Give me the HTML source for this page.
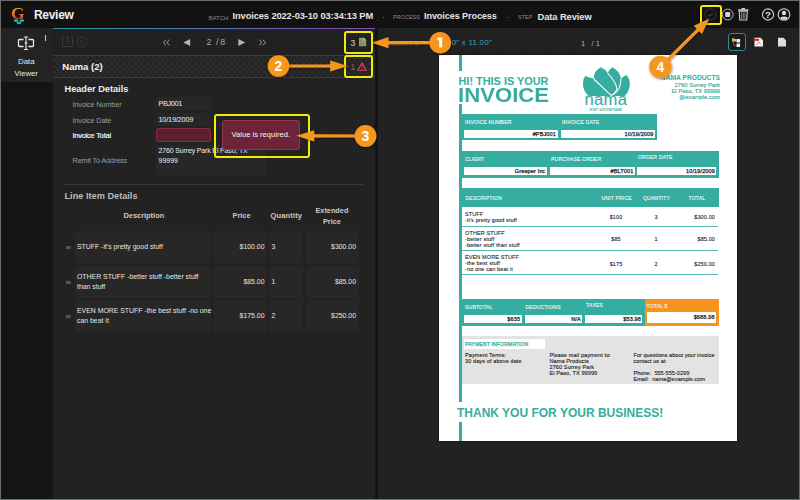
<!DOCTYPE html>
<html><head><meta charset="utf-8">
<style>
*{margin:0;padding:0;box-sizing:border-box}
html,body{width:800px;height:500px;overflow:hidden;background:#1f1f1f}
body{font-family:"Liberation Sans",sans-serif;position:relative;color:#e8e8e8}
.a{position:absolute}
.t{position:absolute;white-space:nowrap;line-height:1}
.b{font-weight:bold}
.grid{background-color:#1f1f1f;background-image:linear-gradient(#222 1px,transparent 1px),linear-gradient(90deg,#222 1px,transparent 1px);background-size:3px 3px}
.chk{background-color:#232323;background-image:linear-gradient(45deg,#2c2c2c 25%,transparent 25%,transparent 75%,#2c2c2c 75%),linear-gradient(45deg,#2c2c2c 25%,transparent 25%,transparent 75%,#2c2c2c 75%);background-size:6px 6px;background-position:0 0,3px 3px}
.ybox{position:absolute;border:2px solid #f2ea0a;border-radius:3px}
.cell{position:absolute;background:#272727;border-radius:2px}
.fld{position:absolute;background:#272727;border-radius:2px}
.lbl{position:absolute;white-space:nowrap;line-height:1;font-size:7.4px;letter-spacing:-0.2px;color:#9c9c9c}
.val{position:absolute;white-space:nowrap;line-height:1;font-size:7px;color:#ececec}
.ct{position:absolute;white-space:nowrap;line-height:10px;font-size:6.9px;color:#e6e6e6}
/* invoice */
.tl{background:#35ada0}
.inv{position:absolute;white-space:nowrap;line-height:1;font-size:5.1px;letter-spacing:0.15px;-webkit-text-stroke:0.12px #eef9f8;color:#eef9f8}
.wi{position:absolute;background:#fff}
.iv{position:absolute;white-space:nowrap;line-height:1;font-size:5.5px;letter-spacing:0.15px;-webkit-text-stroke:0.25px #222;color:#222;text-align:right}
.ix{position:absolute;white-space:nowrap;line-height:6px;font-size:5.5px;letter-spacing:0.12px;-webkit-text-stroke:0.1px #262626;color:#262626}
</style></head><body>
<!-- header -->
<div class="a" style="left:0;top:0;width:800px;height:28px;background:#121212"></div>
<!-- left nav -->
<div class="a" style="left:0;top:28px;width:53px;height:472px;background:#141414"></div>
<div class="a" style="left:0;top:28px;width:53px;height:54px;background:#232323"></div>
<!-- left panel -->
<div class="a" style="left:53px;top:28px;width:322px;height:472px;background:#222"></div>
<div class="a grid" style="left:53px;top:29px;width:322px;height:26px"></div>
<div class="a" style="left:53px;top:27.6px;width:322px;height:1.2px;background:linear-gradient(90deg,#1f9aa6,#4a78b0 45%,#8a45b8)"></div>
<div class="a" style="left:53px;top:55px;width:322px;height:1px;background:#3c3c3c"></div>
<div class="a chk" style="left:53px;top:56px;width:322px;height:21px"></div>
<div class="a" style="left:53px;top:77px;width:322px;height:1px;background:#3c3c3c"></div>
<!-- separator -->
<div class="a" style="left:375px;top:28px;width:3px;height:472px;background:#141414"></div>
<!-- right panel -->
<div class="a" style="left:378px;top:28px;width:422px;height:472px;background:#222"></div>
<div class="a grid" style="left:378px;top:28px;width:422px;height:27px"></div>

<!-- header content -->
<div class="t b" style="left:11px;top:5px;font-family:'Liberation Serif',serif;font-size:17.5px;line-height:17.5px;background:linear-gradient(#f0952a 25%,#dc3a26 85%);-webkit-background-clip:text;color:transparent">G</div>
<svg class="a" style="left:13px;top:19px" width="12" height="6" viewBox="0 0 12 6"><ellipse cx="3" cy="1.6" rx="2.4" ry="1.3" fill="#1fb0a6"/><ellipse cx="9" cy="1.6" rx="2.4" ry="1.3" fill="#1fb0a6"/><ellipse cx="6" cy="3.9" rx="2.4" ry="1.3" fill="#1fb0a6"/></svg>
<div class="t b" style="left:34px;top:9px;font-size:12px;letter-spacing:-0.3px;color:#f0f0f0">Review</div>
<div class="t" style="left:208.5px;top:14.5px;font-size:6px;color:#8a8a8a">BATCH</div>
<div class="t b" style="left:232.5px;top:11.5px;font-size:9.3px;letter-spacing:-0.1px;color:#e4e4e4">Invoices 2022-03-10 03:34:13 PM</div>
<div class="a" style="left:382.5px;top:16.5px;width:1.6px;height:1.6px;background:#888;border-radius:1px"></div>
<div class="t" style="left:393px;top:14.5px;font-size:5.5px;color:#8a8a8a">PROCESS</div>
<div class="t b" style="left:424px;top:11.5px;font-size:9.1px;letter-spacing:-0.1px;color:#e4e4e4">Invoices Process</div>
<div class="a" style="left:507.5px;top:16.5px;width:1.6px;height:1.6px;background:#888;border-radius:1px"></div>
<div class="t" style="left:518px;top:14.5px;font-size:5.5px;color:#8a8a8a">STEP</div>
<div class="t b" style="left:537.5px;top:11.5px;font-size:9.4px;letter-spacing:-0.1px;color:#e4e4e4">Data Review</div>
<!-- header icons -->
<div class="ybox" style="left:700px;top:5px;width:21.5px;height:19.5px"></div>
<svg class="a" style="left:704px;top:8px" width="13" height="13" viewBox="0 0 13 13"><circle cx="6.5" cy="6.5" r="5.5" fill="none" stroke="#3a3a3a" stroke-width="1"/><path d="M4.2 6.5 L5.9 8.2 L8.8 4.9" fill="none" stroke="#4a5663" stroke-width="0.9"/></svg>
<svg class="a" style="left:721px;top:8px" width="14" height="14" viewBox="0 0 14 14"><circle cx="6.7" cy="6.5" r="5.4" fill="none" stroke="#c8c8c8" stroke-width="0.9"/><rect x="4.2" y="4" width="5" height="5" rx="0.8" fill="#d4d4d4"/></svg>
<svg class="a" style="left:737px;top:8px" width="13" height="13" viewBox="0 0 13 13"><rect x="1" y="1.2" width="10.5" height="1.6" rx="0.5" fill="#cfcfcf"/><rect x="4.5" y="0" width="3.5" height="1.5" fill="#cfcfcf"/><path d="M2.2 3.3 H10.3 L9.7 12 H2.8 Z" fill="none" stroke="#cfcfcf" stroke-width="1.1"/><path d="M4.6 4.5 V10.8 M6.25 4.5 V10.8 M7.9 4.5 V10.8" stroke="#b9a2a2" stroke-width="0.8"/></svg>
<svg class="a" style="left:761px;top:8px" width="14" height="14" viewBox="0 0 14 14"><circle cx="7" cy="6.5" r="5.6" fill="none" stroke="#d0d0d0" stroke-width="1.1"/><text x="7" y="10" font-family="Liberation Sans" font-weight="bold" font-size="9.6" fill="#d8d8d8" text-anchor="middle">?</text></svg>
<svg class="a" style="left:777px;top:8px" width="14" height="14" viewBox="0 0 14 14"><defs><clipPath id="uc"><circle cx="7" cy="6.5" r="5.2"/></clipPath></defs><circle cx="7" cy="6.5" r="5.8" fill="none" stroke="#d0d0d0" stroke-width="1.1"/><g clip-path="url(#uc)" fill="#d8d8d8"><circle cx="7" cy="5" r="2.2"/><ellipse cx="7" cy="12" rx="4.8" ry="3.6"/></g></svg>

<!-- nav button -->
<svg class="a" style="left:17px;top:36px" width="19" height="15" viewBox="0 0 19 15"><path d="M6.5 3.5 H2.5 Q1.5 3.5 1.5 4.5 V9.5 Q1.5 10.5 2.5 10.5 H6.5" fill="none" stroke="#ececec" stroke-width="1.3"/><path d="M11.5 3.5 H15.5 Q16.5 3.5 16.5 4.5 V9.5 Q16.5 10.5 15.5 10.5 H11.5" fill="none" stroke="#ececec" stroke-width="1.3"/><path d="M6.8 1 H11.2 M9 1 V13.5 M6.8 13.5 H11.2 M7.5 7 H10.5" fill="none" stroke="#dfe3f0" stroke-width="1.2"/></svg>
<div class="t" style="left:18px;top:58px;font-size:7.9px;color:#e8e8e8">Data</div>
<div class="t" style="left:14.5px;top:69.5px;font-size:7.7px;color:#e8e8e8">Viewer</div>
<div class="a" style="left:45px;top:35px;width:1.4px;height:6px;background:#e8e000"></div>

<!-- left toolbar -->
<svg class="a" style="left:61px;top:35px" width="13" height="13" viewBox="0 0 13 13"><path d="M3.5 1.5 H2.2 Q1.5 1.5 1.5 2.2 V10.8 Q1.5 11.5 2.2 11.5 H10.8 Q11.5 11.5 11.5 10.8 V2.2 Q11.5 1.5 10.8 1.5 H9.5" fill="none" stroke="#3a3a3a" stroke-width="1"/><path d="M6.5 1 V7.5 M4.3 5.5 L6.5 7.8 L8.7 5.5" fill="none" stroke="#3a3a3a" stroke-width="1"/></svg>
<svg class="a" style="left:76px;top:36px" width="12" height="12" viewBox="0 0 12 12"><circle cx="6" cy="6" r="5" fill="none" stroke="#363636" stroke-width="1"/><path d="M3.8 3.8 L8.2 8.2 M8.2 3.8 L3.8 8.2" stroke="#363636" stroke-width="0.9"/></svg>
<svg class="a" style="left:162px;top:39px" width="9" height="7" viewBox="0 0 9 7"><path d="M4 0.8 L1.2 3.5 L4 6.2 M7.6 0.8 L4.8 3.5 L7.6 6.2" fill="none" stroke="#a8a8a8" stroke-width="1"/></svg>
<svg class="a" style="left:183px;top:38.5px" width="8" height="7" viewBox="0 0 8 7"><path d="M0.3 3.5 L7.2 0 V7 Z" fill="#b4b4b4"/></svg>
<div class="t" style="left:206.5px;top:38.3px;font-size:8.8px;color:#a9a9a9">2</div>
<div class="t" style="left:216px;top:38.3px;font-size:8.8px;letter-spacing:-0.3px;color:#a9a9a9">/ 8</div>
<svg class="a" style="left:238px;top:38.5px" width="8" height="7" viewBox="0 0 8 7"><path d="M7.2 3.5 L0.3 0 V7 Z" fill="#b4b4b4"/></svg>
<svg class="a" style="left:258px;top:39px" width="9" height="7" viewBox="0 0 9 7"><path d="M1.2 0.8 L4 3.5 L1.2 6.2 M4.8 0.8 L7.6 3.5 L4.8 6.2" fill="none" stroke="#a8a8a8" stroke-width="1"/></svg>
<div class="t" style="left:350.5px;top:38.5px;font-size:8.6px;color:#d9d6b8">3</div>
<svg class="a" style="left:358px;top:37px" width="9" height="10" viewBox="0 0 9 10"><path d="M1 0.8 H5.8 L8.2 3.2 V9.2 H1 Z" fill="#8a9a6a"/><path d="M5.8 0.8 V3.2 H8.2" fill="#c9d0b0"/><path d="M2.6 3 V8" stroke="#b06c4a" stroke-width="0.8"/><path d="M4 4 V8 M5.5 4.5 V8" stroke="#4fa07a" stroke-width="0.8"/></svg>
<div class="ybox" style="left:344px;top:31px;width:28.5px;height:23px"></div>
<div class="t b" style="left:62.3px;top:62px;font-size:9.6px;color:#f2f2f2">Nama (2)</div>
<div class="t" style="left:350.5px;top:63px;font-size:8.6px;color:#d8405e">1</div>
<svg class="a" style="left:357px;top:62px" width="10" height="9" viewBox="0 0 10 9"><path d="M5 0.9 L9.3 8.3 H0.7 Z" fill="none" stroke="#d8405e" stroke-width="1.1" stroke-linejoin="round"/><path d="M5 3.2 V5.8 M5 6.6 V7.3" stroke="#d8405e" stroke-width="0.9"/></svg>
<div class="ybox" style="left:344px;top:55px;width:28.5px;height:23px"></div>

<!-- header details -->
<div class="t b" style="left:64.5px;top:84.5px;font-size:9.2px;color:#ececec">Header Details</div>
<div class="lbl" style="left:72.5px;top:100.5px">Invoice Number</div>
<div class="lbl" style="left:72.5px;top:116.5px">Invoice Date</div>
<div class="lbl" style="left:72.5px;top:132px;color:#f4f4f4;-webkit-text-stroke:0.2px #f4f4f4">Invoice Total</div>
<div class="lbl" style="left:72.5px;top:156.5px">Remit To Address</div>
<div class="fld" style="left:156px;top:97px;width:55px;height:13px"></div>
<div class="fld" style="left:156px;top:113px;width:55px;height:13px"></div>
<div class="a" style="left:156px;top:128px;width:55px;height:14px;background:#5c1f2e;border:1px solid #8a2a40;border-radius:2px"></div>
<div class="fld" style="left:156px;top:145px;width:110px;height:31px"></div>
<div class="val" style="left:158.5px;top:100px;letter-spacing:-0.4px;font-size:7.4px">PBJ001</div>
<div class="val" style="left:158.5px;top:116px;font-size:7.4px;letter-spacing:-0.25px">10/19/2009</div>
<div class="val" style="left:158.5px;top:146.5px;letter-spacing:-0.15px">2760 Surrey Park El Paso, TX</div>
<div class="val" style="left:158.5px;top:156.5px">99999</div>
<div class="a" style="left:64px;top:184px;width:300px;height:1px;background:#373737"></div>
<!-- tooltip -->
<div class="a" style="left:222px;top:120px;width:78px;height:30px;background:#6e2438;border:1px solid #933650;border-radius:3px"></div>
<div class="t" style="left:231.5px;top:131px;font-size:7.6px;color:#f4f4f4">Value is required.</div>
<div class="ybox" style="left:213.5px;top:113.5px;width:96px;height:44px"></div>
<!-- line items -->
<div class="t b" style="left:64.5px;top:192px;font-size:9.2px;color:#b9b9b9">Line Item Details</div>
<div class="t b" style="left:123.5px;top:212px;font-size:7.4px;color:#c9c9c9">Description</div>
<div class="t b" style="left:232.5px;top:212px;font-size:7.4px;color:#c9c9c9">Price</div>
<div class="t b" style="left:270.5px;top:212px;font-size:7.5px;color:#c9c9c9;letter-spacing:0.15px">Quantity</div>
<div class="t b" style="left:315.5px;top:207px;font-size:7.3px;color:#c9c9c9">Extended</div>
<div class="t b" style="left:323px;top:217.5px;font-size:7.3px;color:#c9c9c9">Price</div>
<div class="cell" style="left:75px;top:231px;width:136px;height:32px"></div>
<div class="cell" style="left:214px;top:231px;width:52px;height:32px"></div>
<div class="cell" style="left:269px;top:231px;width:34px;height:32px"></div>
<div class="cell" style="left:306px;top:231px;width:53px;height:32px"></div>
<div class="a" style="left:66px;top:246.0px;width:5px;height:2.5px;background:#555;border-radius:0 1px 1px 0"></div>
<div class="ct" style="left:77px;top:242.0px">STUFF -it's pretty good stuff</div>
<div class="ct" style="left:214px;top:242.0px;width:50.5px;text-align:right">$100.00</div>
<div class="ct" style="left:271.5px;top:242.0px">3</div>
<div class="ct" style="left:306px;top:242.0px;width:50px;text-align:right">$300.00</div>
<div class="cell" style="left:75px;top:266px;width:136px;height:32px"></div>
<div class="cell" style="left:214px;top:266px;width:52px;height:32px"></div>
<div class="cell" style="left:269px;top:266px;width:34px;height:32px"></div>
<div class="cell" style="left:306px;top:266px;width:53px;height:32px"></div>
<div class="a" style="left:66px;top:281.0px;width:5px;height:2.5px;background:#555;border-radius:0 1px 1px 0"></div>
<div class="ct" style="left:77px;top:272.0px">OTHER STUFF -better stuff -better stuff<br>than stuff</div>
<div class="ct" style="left:214px;top:277.0px;width:50.5px;text-align:right">$85.00</div>
<div class="ct" style="left:271.5px;top:277.0px">1</div>
<div class="ct" style="left:306px;top:277.0px;width:50px;text-align:right">$85.00</div>
<div class="cell" style="left:75px;top:300px;width:136px;height:32px"></div>
<div class="cell" style="left:214px;top:300px;width:52px;height:32px"></div>
<div class="cell" style="left:269px;top:300px;width:34px;height:32px"></div>
<div class="cell" style="left:306px;top:300px;width:53px;height:32px"></div>
<div class="a" style="left:66px;top:315.0px;width:5px;height:2.5px;background:#555;border-radius:0 1px 1px 0"></div>
<div class="ct" style="left:77px;top:306.0px">EVEN MORE STUFF -the best stuff -no one<br>can beat it</div>
<div class="ct" style="left:214px;top:311.0px;width:50.5px;text-align:right">$175.00</div>
<div class="ct" style="left:271.5px;top:311.0px">2</div>
<div class="ct" style="left:306px;top:311.0px;width:50px;text-align:right">$250.00</div>

<!-- right toolbar -->
<div class="t" style="left:388px;top:39.5px;font-size:7px;color:#5a6066">Zoom:</div>
<div class="t" style="left:410px;top:39.5px;font-size:7px;color:#2b8a96">Fit</div>
<div class="t" style="left:440px;top:38.8px;font-size:8px;letter-spacing:0.2px;color:#36aabb">8.50" x 11.00"</div>
<div class="t" style="left:581px;top:39.5px;font-size:7.6px;color:#aeb4b8">1</div>
<div class="t" style="left:591.5px;top:39.5px;font-size:7.6px;color:#aeb4b8">/ 1</div>
<div class="a" style="left:728px;top:33px;width:18px;height:18px;border:1.2px solid #2a8f96;border-radius:3px;background:#1a1a1a"></div>
<svg class="a" style="left:731px;top:37px" width="11" height="11" viewBox="0 0 11 11"><path d="M1 1.2 H3 L3.6 1.9 H5.3 V4.6 H1 Z" fill="#e2b65a"/><path d="M2.5 4.6 V7.5 Q2.5 8.3 3.3 8.3 H5.5" fill="none" stroke="#9a9a9a" stroke-width="0.6"/><rect x="5.5" y="2" width="3.6" height="3.6" rx="0.6" fill="#eeeeee"/><rect x="5.5" y="6.4" width="3.6" height="3.6" rx="0.6" fill="#eeeeee"/></svg>
<svg class="a" style="left:753px;top:37px" width="11" height="10" viewBox="0 0 11 10"><path d="M1.5 0.8 H7.5 L10 3.2 V9.5 H1.5 Z" fill="#f4f4f4"/><rect x="0.5" y="1.8" width="5.5" height="2" fill="#e01818"/><path d="M3.5 8 Q5 5 6 4.8 Q7 6.5 8.5 7.8" fill="none" stroke="#e03030" stroke-width="0.6"/></svg>
<svg class="a" style="left:777px;top:37px" width="10" height="10" viewBox="0 0 10 10"><path d="M1 0.8 H6.5 L9 3.2 V9.5 H1 Z" fill="#dcdcdc"/></svg>
<!-- page -->
<div class="a" style="left:439px;top:55px;width:298px;height:385.5px;background:#fff;box-shadow:0 0 1.5px rgba(0,0,0,0.8)"></div>
<div class="a tl" style="left:459px;top:55px;width:3px;height:16px"></div>
<div class="a tl" style="left:459px;top:104px;width:3px;height:298px"></div>
<div class="a tl" style="left:459px;top:422px;width:3px;height:19px"></div>
<div class="t b" style="left:458.5px;top:75.5px;font-size:10.9px;color:#35ada0">HI! THIS IS YOUR</div>
<div class="t b" style="left:458px;top:86px;font-size:19.8px;transform:scaleX(1.12);transform-origin:0 0;color:#35ada0">INVOICE</div>

<!-- logo -->
<svg class="a" style="left:580px;top:63px" width="52" height="34" viewBox="0 0 52 34">
<path d="M5.4 13 Q9 14.5 14 15.8 Q13.2 8 20.9 4.3 Q25.5 6.5 27.7 10 Q29 6.5 32.4 4.3 Q39.8 8 41 15.8 Q43.5 12.8 46.8 11.9 Q51.5 19 49 26 Q47.5 31 44.6 33 L8.6 33 Q2.2 27 3 19 Q3.6 15 5.4 13 Z" fill="#35ada0"/>
<path d="M13.8 16 L31 32.4" fill="none" stroke="#fff" stroke-width="1.05"/>
<path d="M27.6 10 Q37.5 21 36.8 26.6 Q35 30.5 31 32.4" fill="none" stroke="#fff" stroke-width="1.05"/>
<path d="M41 15.8 Q40.8 23.5 37.5 27.8 Q34.8 31 31 32.4" fill="none" stroke="#fff" stroke-width="1.05"/>
</svg>
<div class="t" style="left:584.5px;top:91.5px;font-size:16.6px;letter-spacing:0.3px;-webkit-text-stroke:0.1px #35ada0;color:#35ada0">nama</div>
<div class="t" style="left:589.8px;top:107.8px;font-size:4.2px;letter-spacing:0.12px;-webkit-text-stroke:0.15px #35ada0;color:#35ada0">EST 02/18/2006</div>
<!-- company -->
<div class="t b" style="left:620px;top:75px;width:100px;text-align:right;font-size:6.7px;color:#35ada0">NAMA PRODUCTS</div>
<div class="t" style="left:620px;top:82.7px;width:100px;text-align:right;font-size:5.85px;-webkit-text-stroke:0.15px #35ada0;color:#35ada0">2760 Surrey Park</div>
<div class="t" style="left:620px;top:88.7px;width:100px;text-align:right;font-size:5.85px;-webkit-text-stroke:0.15px #35ada0;color:#35ada0">El Paso, TX 99999</div>
<div class="t" style="left:620px;top:95.2px;width:100px;text-align:right;font-size:5.85px;-webkit-text-stroke:0.15px #35ada0;color:#35ada0">@example.com</div>
<!-- section 1 -->
<div class="a tl" style="left:459px;top:114px;width:198px;height:26px"></div>
<div class="inv" style="left:465px;top:119.5px">INVOICE NUMBER</div>
<div class="inv" style="left:562px;top:119.5px">INVOICE DATE</div>
<div class="wi" style="left:464px;top:130px;width:93.5px;height:7.5px"></div>
<div class="wi" style="left:560.5px;top:130px;width:94px;height:7.5px"></div>
<div class="iv" style="left:464px;top:131.5px;width:92px">#PBJ001</div>
<div class="iv" style="left:560px;top:131.5px;width:93.5px">10/19/2009</div>
<!-- section 2 -->
<div class="a tl" style="left:459px;top:151px;width:259.5px;height:26.5px"></div>
<div class="inv" style="left:465px;top:156.5px">CLIENT</div>
<div class="inv" style="left:551px;top:156.5px">PURCHASE ORDER</div>
<div class="inv" style="left:638px;top:154.5px">ORDER DATE</div>
<div class="wi" style="left:464px;top:166.7px;width:83px;height:8px"></div>
<div class="wi" style="left:550px;top:166.7px;width:84.5px;height:8px"></div>
<div class="wi" style="left:637px;top:166.7px;width:78.5px;height:8px"></div>
<div class="iv" style="left:464px;top:168.5px;width:81.5px">Greeper Inc</div>
<div class="iv" style="left:550px;top:168.5px;width:83.5px">#BLT001</div>
<div class="iv" style="left:637px;top:168.5px;width:78px">10/19/2009</div>
<!-- section 3 -->
<div class="a tl" style="left:459px;top:188px;width:260px;height:19px"></div>
<div class="inv" style="left:465.5px;top:195.5px">DESCRIPTION</div>
<div class="inv" style="left:601.5px;top:195.5px">UNIT PRICE</div>
<div class="inv" style="left:643px;top:195.5px">QUANTITY</div>
<div class="inv" style="left:688.5px;top:195.5px">TOTAL</div>
<div class="a tl" style="left:462px;top:226px;width:256px;height:0.7px;opacity:0.85"></div>
<div class="a tl" style="left:462px;top:250.3px;width:256px;height:0.7px;opacity:0.85"></div>
<div class="a tl" style="left:462px;top:274px;width:256px;height:0.7px;opacity:0.85"></div>
<div class="ix" style="left:465px;top:211px">STUFF<br>-it's pretty good stuff</div>
<div class="ix" style="left:465px;top:229.5px">OTHER STUFF<br>-better stuff<br>-better stuff than stuff</div>
<div class="ix" style="left:465px;top:254px">EVEN MORE STUFF<br>-the best stuff<br>-no one can beat it</div>
<div class="ix" style="left:596px;top:214px;width:40px;text-align:center">$100</div>
<div class="ix" style="left:596px;top:236px;width:40px;text-align:center">$85</div>
<div class="ix" style="left:596px;top:260.5px;width:40px;text-align:center">$175</div>
<div class="ix" style="left:636px;top:214px;width:40px;text-align:center">3</div>
<div class="ix" style="left:636px;top:236px;width:40px;text-align:center">1</div>
<div class="ix" style="left:636px;top:260.5px;width:40px;text-align:center">2</div>
<div class="ix" style="left:655px;top:214px;width:60px;text-align:right">$300.00</div>
<div class="ix" style="left:655px;top:236px;width:60px;text-align:right">$85.00</div>
<div class="ix" style="left:655px;top:260.5px;width:60px;text-align:right">$250.00</div>
<!-- totals -->
<div class="a tl" style="left:459px;top:299px;width:185.5px;height:26.8px"></div>
<div class="a" style="left:644.5px;top:299px;width:74.5px;height:26.8px;background:#f7941d"></div>
<div class="inv" style="left:465px;top:304.5px">SUBTOTAL</div>
<div class="inv" style="left:525.5px;top:304.5px">DEDUCTIONS</div>
<div class="inv" style="left:586px;top:302.8px">TAXES</div>
<div class="inv" style="left:646.5px;top:304px">TOTAL $</div>
<div class="wi" style="left:464px;top:315.3px;width:57.7px;height:7.3px"></div>
<div class="wi" style="left:524.7px;top:315.3px;width:57px;height:7.3px"></div>
<div class="wi" style="left:585px;top:315.3px;width:57px;height:7.3px"></div>
<div class="wi" style="left:646.6px;top:312px;width:69.5px;height:11px"></div>
<div class="iv" style="left:464px;top:316.5px;width:56.2px">$635</div>
<div class="iv" style="left:524.7px;top:316.5px;width:56.2px">N/A</div>
<div class="iv" style="left:585px;top:316.5px;width:56px">$53.98</div>
<div class="iv" style="left:646.6px;top:315px;width:68px">$688.98</div>
<!-- payment -->
<div class="a" style="left:462px;top:336.3px;width:257px;height:47.7px;background:#e3e3e3"></div>
<div class="wi" style="left:464px;top:339px;width:81px;height:10px"></div>
<div class="inv" style="left:465px;top:341.5px;color:#35ada0;-webkit-text-stroke:0.25px #35ada0">PAYMENT INFORMATION</div>
<div class="ix" style="left:465px;top:351.5px;-webkit-text-stroke:0.12px #1c1c1c;color:#1c1c1c">Payment Terms:<br>30 days of above date</div>
<div class="ix" style="left:549.5px;top:351.5px;-webkit-text-stroke:0.12px #1c1c1c;color:#1c1c1c">Please mail payment to:<br>Nama Products<br>2760 Surrey Park<br>El Paso, TX 99999</div>
<div class="ix" style="left:633.5px;top:351.5px;letter-spacing:0.05px;-webkit-text-stroke:0.12px #1c1c1c;color:#1c1c1c">For questions about your invoice<br>contact us at:<br><br>Phone:&nbsp; 555-555-0299<br>Email:&nbsp; nama@example.com</div>
<div class="t b" style="left:457px;top:407px;font-size:12px;transform:scaleX(1.0);transform-origin:0 0;color:#35ada0">THANK YOU FOR YOUR BUSINESS!</div>
<!-- arrows -->
<svg class="a" style="left:0;top:0;z-index:40" width="800" height="500" viewBox="0 0 800 500"><defs><filter id="sh" x="-30%" y="-30%" width="160%" height="160%"><feDropShadow dx="0.6" dy="1" stdDeviation="0.9" flood-color="#000" flood-opacity="0.45"/></filter></defs><g filter="url(#sh)"><line x1="439.6" y1="42.7" x2="386.50" y2="42.70" stroke="#f7961f" stroke-width="3.2"/><polygon points="372.00,42.70 388.50,37.10 388.50,48.30" fill="#f7961f"/><line x1="278.5" y1="66" x2="332.20" y2="66.00" stroke="#f7961f" stroke-width="3.2"/><polygon points="347.70,66.00 330.20,71.40 330.20,60.60" fill="#f7961f"/><line x1="365.5" y1="136" x2="312.20" y2="135.85" stroke="#f7961f" stroke-width="3.2"/><polygon points="296.20,135.80 314.22,130.25 314.18,141.45" fill="#f7961f"/><line x1="660.4" y1="67" x2="699.25" y2="28.55" stroke="#f7961f" stroke-width="3.2"/><polygon points="709.20,18.70 701.91,34.08 693.75,25.83" fill="#f7961f"/></g><circle cx="440.2" cy="42.7" r="10.8" fill="#f7961f" filter="url(#sh)"/><path d="M439.2 37.6 H442.2 V47.4 H439.2 V40.3 H437.5 V37.6 Z" fill="#fff"/><circle cx="278.5" cy="66" r="10.8" fill="#f7961f" filter="url(#sh)"/><text x="278.5" y="70.9" font-family="Liberation Sans" font-weight="bold" font-size="14" fill="#fff" text-anchor="middle">2</text><circle cx="365.5" cy="136" r="10.9" fill="#f7961f" filter="url(#sh)"/><text x="365.5" y="140.9" font-family="Liberation Sans" font-weight="bold" font-size="14" fill="#fff" text-anchor="middle">3</text><circle cx="660.4" cy="67" r="11.2" fill="#f7961f" filter="url(#sh)"/><text x="660.4" y="71.9" font-family="Liberation Sans" font-weight="bold" font-size="14" fill="#fff" text-anchor="middle">4</text></svg>
<!-- border -->
<div class="a" style="left:0;top:0;width:800px;height:500px;border:1px solid #6a6d6e;z-index:50"></div>
</body></html>
